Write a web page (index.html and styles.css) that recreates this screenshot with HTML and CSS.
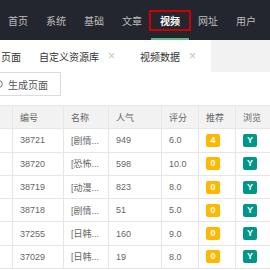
FILE: index.html
```html
<!DOCTYPE html>
<html lang="zh-CN">
<head>
  <meta charset="UTF-8" />
  <title>视频数据</title>
  <link rel="stylesheet" href="styles.css">
</head>
<body>
  <div class="topbar">
    <div class="nav-item">首页</div>
    <div class="nav-item">系统</div>
    <div class="nav-item">基础</div>
    <div class="nav-item">文章</div>
    <div class="nav-item active"><span>视频</span></div>
    <div class="nav-item">网址</div>
    <div class="nav-item">用户</div>
  </div>

  <div class="tabs">
    <div class="tab first">页面</div>
    <div class="tab">自定义资源库<i class="close">×</i></div>
    <div class="tab">视频数据<i class="close">×</i></div>
    <div class="tabs-rest"></div>
  </div>

  <div class="main">
    <div class="toolbar">
      <button class="btn">
        <svg class="ico" viewBox="0 0 10 10" width="10" height="10">
          <circle cx="5" cy="5" r="3.2" fill="none" stroke="#999" stroke-width="1.2"/>
          <circle cx="5" cy="5" r="1" fill="#999"/>
        </svg>
        生成页面
      </button>
    </div>

    <table class="grid">
      <thead>
        <tr>
          <th class="c0"></th>
          <th class="c1">编号</th>
          <th class="c2">名称</th>
          <th class="c3">人气</th>
          <th class="c4">评分</th>
          <th class="c5">推荐</th>
          <th class="c6">浏览</th>
        </tr>
      </thead>
      <tbody>
        <tr><td></td><td>38721</td><td>[剧情...</td><td>949</td><td>6.0</td><td><span class="badge warm">4</span></td><td><span class="badge teal">Y</span></td></tr>
        <tr><td></td><td>38720</td><td>[恐怖...</td><td>598</td><td>10.0</td><td><span class="badge warm">0</span></td><td><span class="badge teal">Y</span></td></tr>
        <tr><td></td><td>38719</td><td>[动漫...</td><td>823</td><td>8.0</td><td><span class="badge warm">0</span></td><td><span class="badge teal">Y</span></td></tr>
        <tr><td></td><td>38718</td><td>[剧情...</td><td>51</td><td>5.0</td><td><span class="badge warm">0</span></td><td><span class="badge teal">Y</span></td></tr>
        <tr><td></td><td>37255</td><td>[日韩...</td><td>160</td><td>9.0</td><td><span class="badge warm">0</span></td><td><span class="badge teal">Y</span></td></tr>
        <tr><td></td><td>37029</td><td>[日韩...</td><td>19</td><td>8.0</td><td><span class="badge warm">0</span></td><td><span class="badge teal">Y</span></td></tr>
      </tbody>
    </table>
  </div>
</body>
</html>
```

FILE: styles.css
```css
body {
  margin: 0;
  background: #fff;
  font-family: "Liberation Sans", "Noto Sans CJK SC", sans-serif;
  color: #666;
  overflow: hidden;
}
.topbar {
  display: flex;
  height: 40px;
  background: #23262e;
  margin-left: -1px;
}
.nav-item {
  width: 38px;
  height: 40px;
  flex: none;
  display: flex;
  align-items: center;
  justify-content: center;
  font-size: 10px;
  color: #bdbdbd;
  box-sizing: border-box;
}
.nav-item.active {
  color: #fff;
  font-weight: bold;
  box-shadow: inset 0 -2px 0 #5fb878;
}
.nav-item.active span {
  border: 2px solid #c00;
  padding: 1px 9px;
  margin: 0 -11px;
}
.tabs {
  display: flex;
  height: 32px;
  align-items: stretch;
  font-size: 10px;
  color: #333;
}
.tab {
  display: flex;
  align-items: center;
  padding: 0 15px 0 10px;
  white-space: nowrap;
}
.tab.first {
  padding: 0 8px 0 1px;
}
.close {
  font-style: normal;
  color: #c2c2c2;
  margin-left: 9px;
  font-size: 12px;
}
.tabs-rest {
  flex: 1;
  background: #f2f2f2;
}
.toolbar {
  height: 33px;
}
.btn {
  display: flex;
  align-items: center;
  gap: 4px;
  height: 24px;
  margin-left: -15px;
  padding: 0 12px 0 8px;
  background: #fff;
  border: 1px solid #dcdcdc;
  color: #555;
  font-family: inherit;
  font-size: 10px;
}
.grid {
  border-collapse: collapse;
  table-layout: fixed;
  width: 290px;
  margin-left: -20px;
  font-size: 9px;
  color: #666;
}
.grid th,
.grid td {
  box-sizing: border-box;
  height: 23.3px;
  padding: 0 7px;
  border: 1px solid #e6e6e6;
  text-align: left;
  font-weight: normal;
  white-space: nowrap;
}
.grid thead th {
  background: #f2f2f2;
}
.c0 { width: 32px; }
.c1 { width: 51px; }
.c2 { width: 45px; }
.c3 { width: 53px; }
.c4 { width: 37px; }
.c5 { width: 37px; }
.c6 { width: 35px; }
.badge {
  display: inline-block;
  width: 14px;
  height: 13px;
  line-height: 13px;
  text-align: center;
  border-radius: 2px;
  color: #fff;
  font-size: 9px;
  font-weight: bold;
  vertical-align: middle;
}
.warm { background: #ffb800; }
.teal { background: #009688; }
```
